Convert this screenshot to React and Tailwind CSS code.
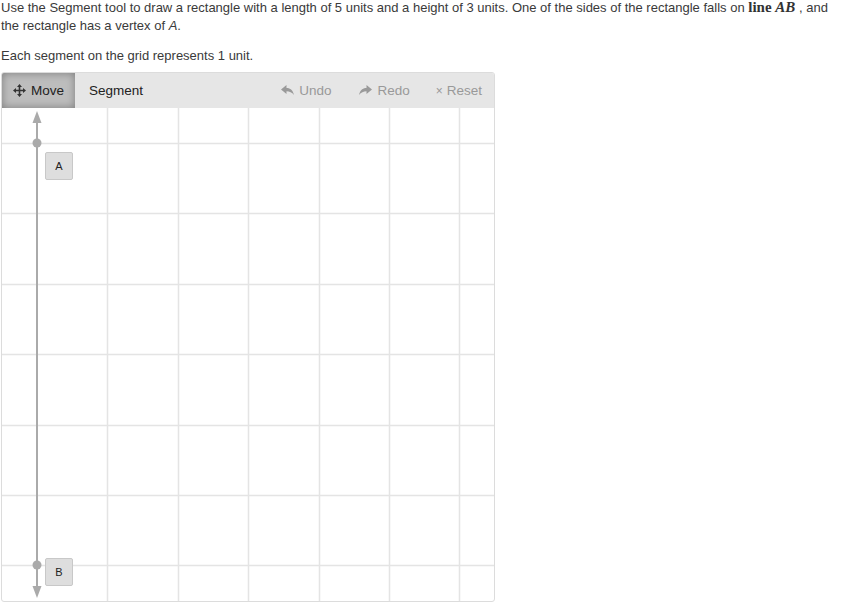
import React from "react";

const step = 70.4;

function Grid() {
  const W = 494;
  const H = 530;
  const vx = [];
  for (let k = 0; k < 8; k++) vx.push(35 + step * k);
  const hy = [];
  for (let k = 0; k < 8; k++) hy.push(70 + step * (k - 1));
  return (
    <svg width={W} height={H} className="absolute left-0 top-0">
      {vx.filter((x) => x > 40 && x < W - 2).map((x, i) => (
        <line key={"v" + i} x1={Math.round(x) + 0.5} y1={0} x2={Math.round(x) + 0.5} y2={H} stroke="#e4e4e4" strokeWidth="1.5" />
      ))}
      {hy.filter((y) => y > 40 && y < H - 2).map((y, i) => (
        <line key={"h" + i} x1={0} y1={Math.round(y) + 0.5} x2={W} y2={Math.round(y) + 0.5} stroke="#e4e4e4" strokeWidth="1.5" />
      ))}
      {/* line AB */}
      <line x1="35" y1="44" x2="35" y2="518" stroke="#aaaaaa" strokeWidth="2" />
      <polygon points="35,38 30.5,50 39.5,50" fill="#aaaaaa" />
      <polygon points="35,525 30.5,513 39.5,513" fill="#aaaaaa" />
      <circle cx="35" cy="70" r="4.5" fill="#aaaaaa" />
      <circle cx="35" cy="492" r="4.5" fill="#aaaaaa" />
    </svg>
  );
}

function MoveIcon() {
  return (
    <svg width="13" height="13" viewBox="0 0 13 13" className="mr-[5px]">
      <path d="M6.5 0 L9 3 H7.3 V5.7 H10 V4 L13 6.5 L10 9 V7.3 H7.3 V10 H9 L6.5 13 L4 10 H5.7 V7.3 H3 V9 L0 6.5 L3 4 V5.7 H5.7 V3 H4 Z" fill="#333" />
    </svg>
  );
}

function UndoIcon({ flip }) {
  return (
    <svg width="13" height="11" viewBox="0 0 13 11" className={flip ? "mr-[5px] -scale-x-100" : "mr-[5px]"}>
      <path d="M0 4.5 L5.5 0 V3 C9.5 3 12 5.5 13 10 C11 7.5 8.5 6.3 5.5 6.3 V9 Z" fill="#9a9a9a" />
    </svg>
  );
}

export default function App() {
  return (
    <div className="w-[865px] h-[606px] bg-white text-[#3a3a3a] font-['Liberation_Sans',Arial,sans-serif] text-[13px] leading-[18px] overflow-hidden">
      <div className="pl-[1px] -mt-[2px] w-[838px]">
        <p>
          Use the Segment tool to draw a rectangle with a length of 5 units and a height of 3 units. One of the sides of the rectangle falls on{" "}
          <span className="font-['Liberation_Serif',serif] text-[15px] font-bold text-[#333]">
            line <i>AB</i>
          </span>{" "}
          , and the rectangle has a vertex of <i>A</i>.
        </p>
        <p className="mt-[12px]">Each segment on the grid represents 1 unit.</p>
      </div>
      <div className="relative ml-[1px] mt-[7px] w-[494px] h-[530px] border border-[#dcdcdc] rounded-[3px] overflow-hidden">
        <Grid />
        <div className="absolute left-[43px] top-[79px] w-[28px] h-[28px] bg-[#dedede] border border-[#c8c8c8] rounded-[2px] flex items-center justify-center text-[11px] text-[#222]">
          A
        </div>
        <div className="absolute left-[43px] top-[485px] w-[28px] h-[28px] bg-[#dedede] border border-[#c8c8c8] rounded-[2px] flex items-center justify-center text-[11px] text-[#222]">
          B
        </div>
        <div className="absolute left-0 top-0 right-0 h-[35px] bg-[#e6e6e6] flex items-center text-[13.5px]">
          <div className="h-full w-[73px] flex items-center justify-center bg-[#bdbdbd] shadow-[inset_0_0_8px_rgba(0,0,0,0.35)] text-[#222]">
            <MoveIcon />
            Move
          </div>
          <div className="ml-[14px] text-[#222]">Segment</div>
          <div className="ml-auto flex items-center text-[#999] pr-[12px]">
            <div className="flex items-center mr-[28px]">
              <UndoIcon />
              Undo
            </div>
            <div className="flex items-center mr-[26px]">
              <UndoIcon flip />
              Redo
            </div>
            <div className="flex items-center">
              <span className="mr-[4px] text-[12px]">×</span>
              Reset
            </div>
          </div>
        </div>
      </div>
    </div>
  );
}
